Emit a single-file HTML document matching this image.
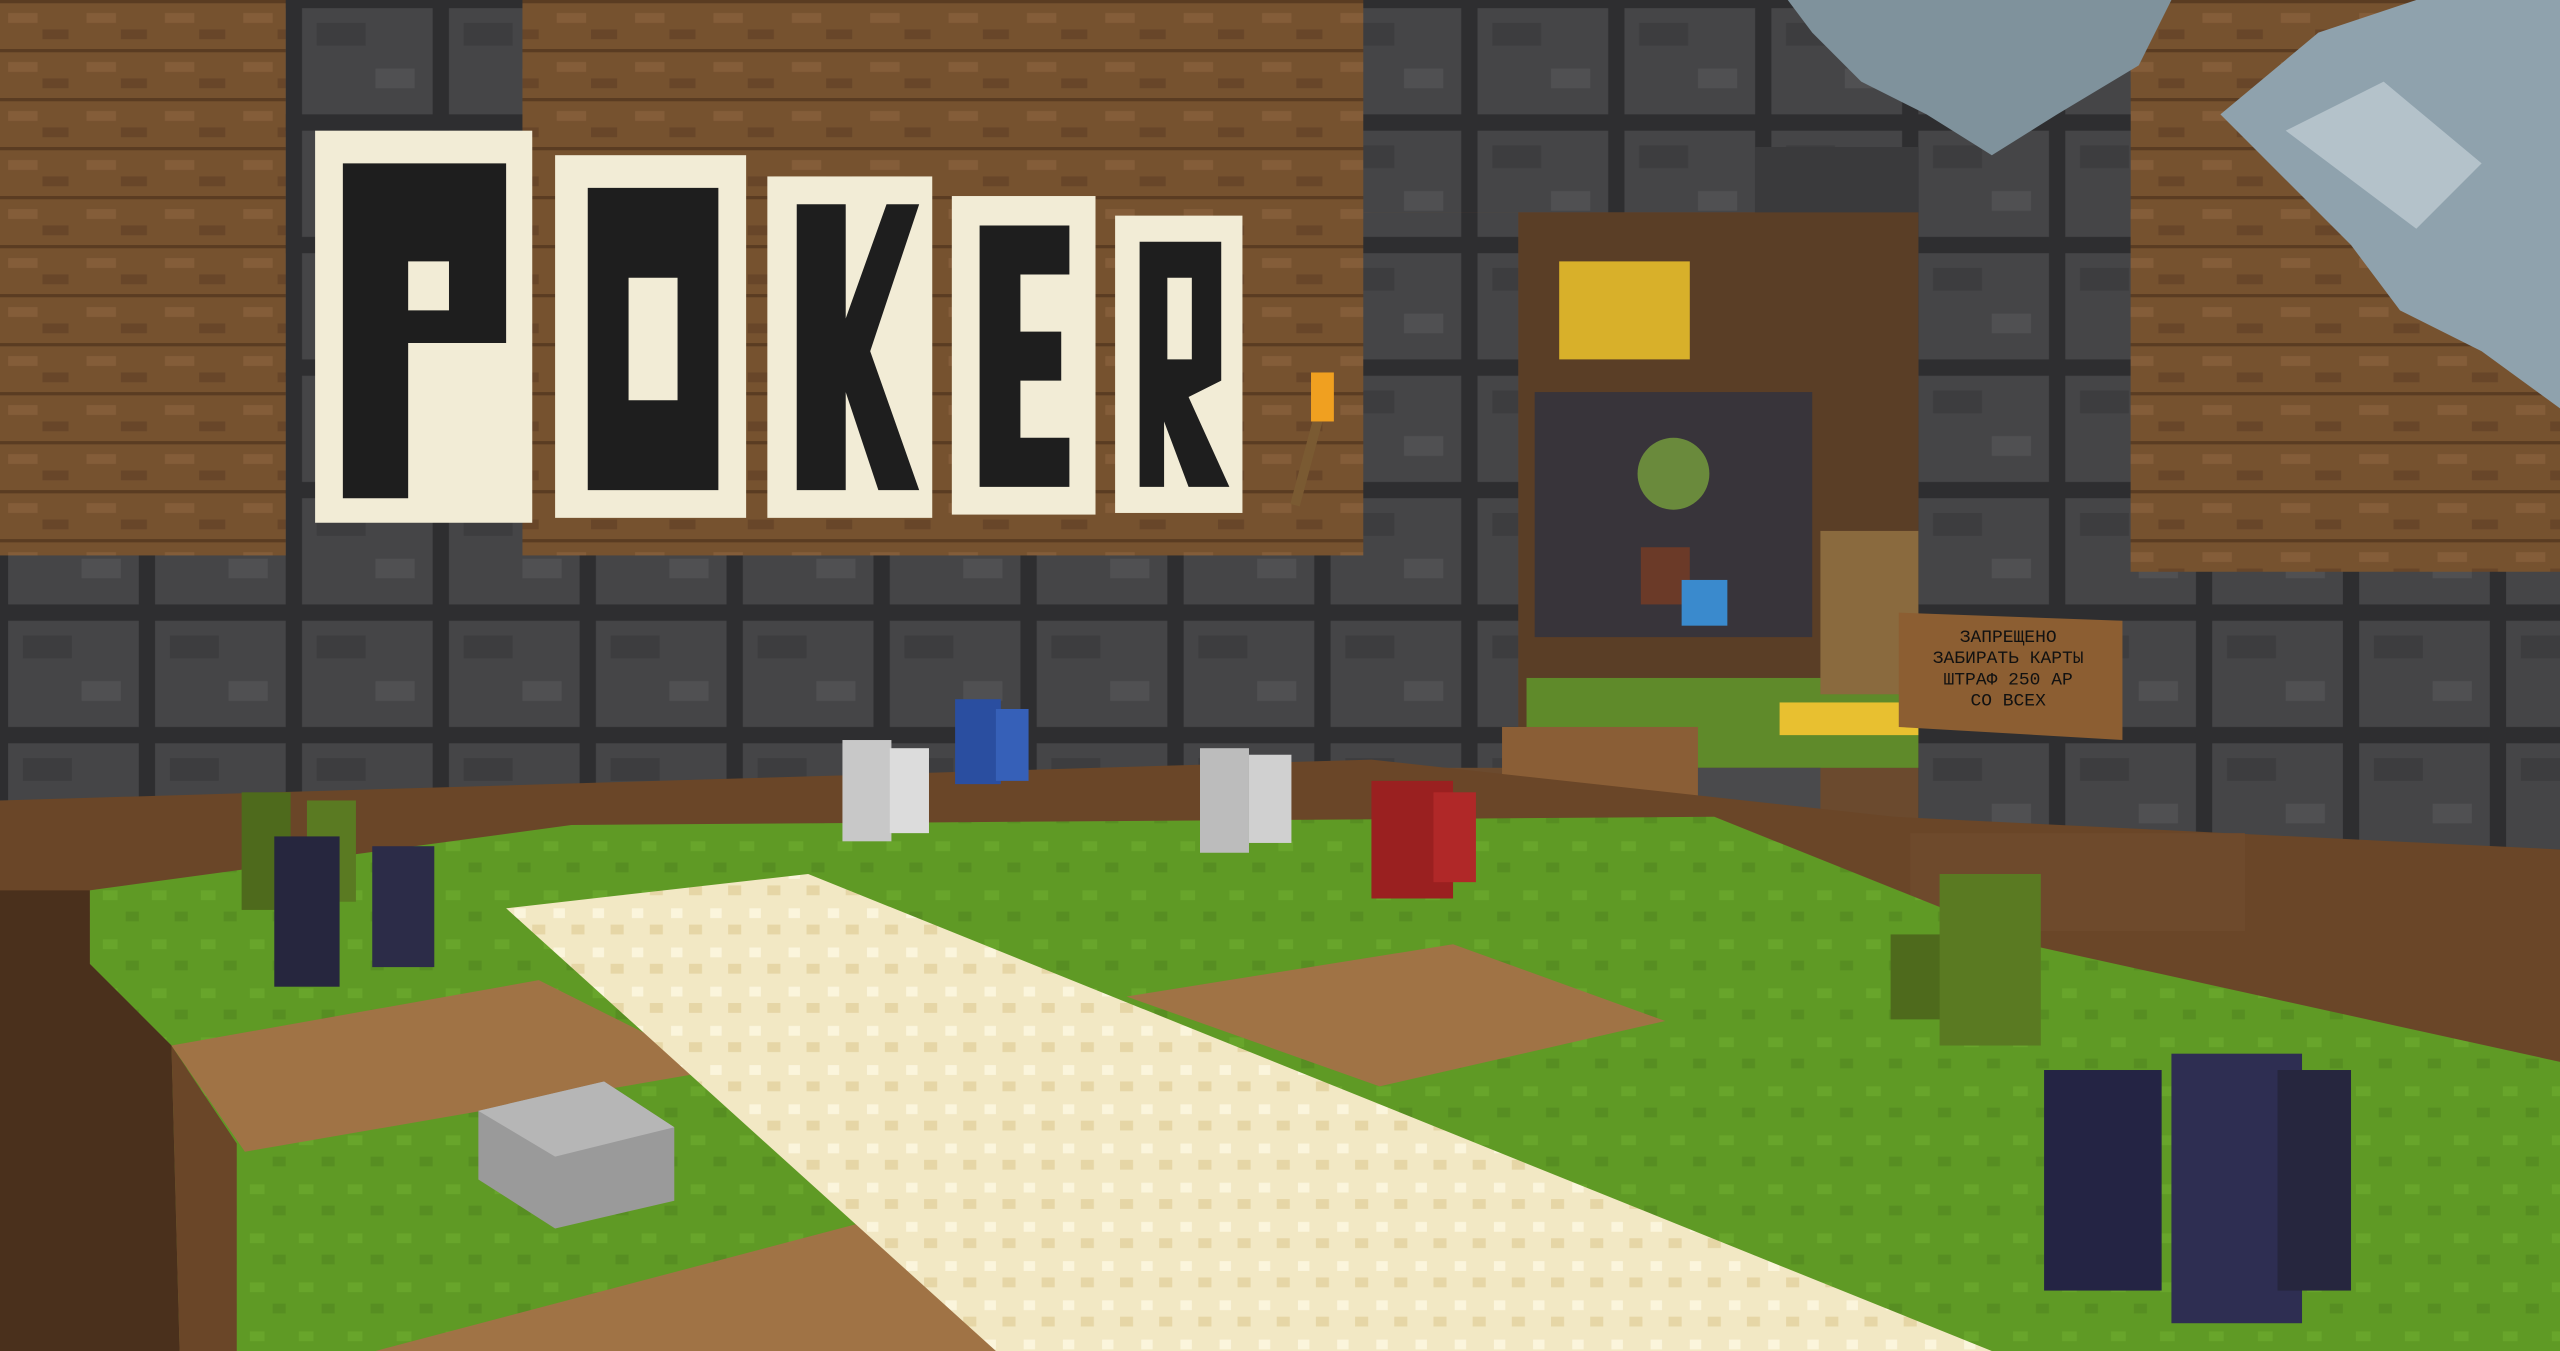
<!DOCTYPE html>
<html><head><meta charset="utf-8"><style>
html,body{margin:0;padding:0;width:2560px;height:1351px;overflow:hidden;background:#6b4a2e}
svg{display:block}
</style></head><body>
<svg width="2560" height="1351" viewBox="0 0 1568 827" preserveAspectRatio="none" xmlns="http://www.w3.org/2000/svg">
<defs>
<pattern id="wood" width="48" height="30" patternUnits="userSpaceOnUse">
<rect width="48" height="30" fill="#76522f"/><rect y="0" width="48" height="2" fill="#5a3c22"/><rect x="5" y="8" width="18" height="6" fill="#845d39"/><rect x="26" y="18" width="16" height="6" fill="#684629"/>
</pattern>
<pattern id="stone" width="90" height="75" patternUnits="userSpaceOnUse">
<rect width="90" height="75" fill="#2e2e30"/><rect x="5" y="5" width="80" height="65" fill="#454547"/><rect x="14" y="14" width="30" height="14" fill="#3d3d3f"/><rect x="50" y="42" width="24" height="12" fill="#505052"/>
</pattern>
<pattern id="felt" width="30" height="30" patternUnits="userSpaceOnUse">
<rect width="30" height="30" fill="#5f9a25"/><rect x="3" y="5" width="9" height="6" fill="#68a52b"/><rect x="17" y="18" width="8" height="6" fill="#578e22"/>
</pattern>
<pattern id="sand" width="24" height="24" patternUnits="userSpaceOnUse">
<rect width="24" height="24" fill="#f2e8c4"/><rect x="3" y="4" width="7" height="6" fill="#fbf5dc"/><rect x="14" y="14" width="8" height="6" fill="#e6d6a6"/>
</pattern>
</defs>
<rect x="0" y="0" width="840" height="350" fill="url(#wood)"/>
<rect x="1300" y="0" width="268" height="360" fill="url(#wood)"/>
<rect x="0" y="340" width="840" height="150" fill="url(#stone)"/>
<rect x="1300" y="350" width="268" height="170" fill="url(#stone)"/>
<rect x="175" y="0" width="145" height="345" fill="url(#stone)"/>
<rect x="835" y="0" width="470" height="130" fill="url(#stone)"/>
<rect x="835" y="130" width="95" height="340" fill="url(#stone)"/>
<rect x="1175" y="50" width="130" height="480" fill="url(#stone)"/>
<rect x="1075" y="90" width="100" height="120" fill="#3a3a3c"/>
<rect x="930" y="130" width="245" height="340" fill="#5a3e26"/>
<rect x="955" y="160" width="80" height="60" fill="#d8b02a"/>
<rect x="940" y="240" width="170" height="150" fill="#38343a"/>
<circle cx="1025" cy="290" r="22" fill="#6a8a3c"/>
<rect x="1005" y="335" width="30" height="35" fill="#6b3a28"/>
<rect x="1030" y="355" width="28" height="28" fill="#3a8acd"/>
<rect x="935" y="415" width="240" height="55" fill="#5f8a2a"/>
<rect x="1090" y="430" width="85" height="20" fill="#e8c030"/>
<rect x="1115" y="325" width="60" height="100" fill="#8a6a3e"/>
<rect x="920" y="445" width="120" height="60" fill="#8a5e36"/>
<rect x="1040" y="470" width="75" height="50" fill="#4a4a4c"/>
<!-- leaves -->
<polygon points="1095,0 1330,0 1310,40 1260,70 1220,95 1180,70 1140,50 1110,20" fill="#7f929c"/>
<polygon points="1360,70 1420,20 1480,0 1568,0 1568,250 1520,215 1470,190 1440,150 1400,110" fill="#8fa2ad"/>
<polygon points="1400,80 1460,50 1520,100 1480,140" fill="#b4c2ca"/>
<!-- POKER -->
<g fill="#f2ecd6">
<rect x="193" y="80" width="133" height="240"/><rect x="340" y="95" width="117" height="222"/><rect x="470" y="108" width="101" height="209"/><rect x="583" y="120" width="88" height="195"/><rect x="683" y="132" width="78" height="182"/>
</g>
<g fill="#1e1e1e">
<path d="M210 100h100v110h-60v95h-40zM250 160h25v30h-25z" fill-rule="evenodd"/>
<path d="M360 115h80v185h-80zM385 170h30v75h-30z" fill-rule="evenodd"/>
<path d="M488 125h30v70l25-70h20l-30 90l30 85h-25l-20-60v60h-30z"/>
<path d="M600 138h55v30h-30v35h25v30h-25v35h30v30h-55z"/>
<path d="M698 148h50v85l-20 10l25 55h-25l-15-40v40h-15zM715 170h15v50h-15z" fill-rule="evenodd"/>
</g>
<rect x="798" y="255" width="6" height="55" fill="#7a5a32" transform="rotate(15 800 280)"/>
<rect x="803" y="228" width="14" height="30" fill="#f0a020"/>
<polygon points="0,490 840,465 1160,500 1568,520 1568,650 1260,600 0,560" fill="#6a4628"/>
<rect x="1170" y="510" width="205" height="60" fill="#6e4a2c"/>
<polygon points="55,545 350,505 1050,500 1250,580 1568,650 1568,827 110,827 105,640 55,590" fill="url(#felt)"/>
<polygon points="0,545 55,545 55,590 105,640 110,827 0,827" fill="#4a301c"/>
<polygon points="105,640 145,700 145,827 110,827" fill="#6a4628"/>
<polygon points="105,640 330,600 440,655 150,705" fill="#a07345"/>
<polygon points="690,610 890,578 1020,625 845,665" fill="#a07345"/>
<polygon points="230,827 560,740 700,827" fill="#a07345"/>
<polygon points="310,556 495,535 1220,827 610,827" fill="url(#sand)"/>
<polygon points="293,680 370,662 413,690 413,735 340,752 293,722" fill="#9a9a9a"/>
<polygon points="293,680 370,662 413,690 340,708" fill="#b6b6b6"/>
<g>
<rect x="148" y="485" width="30" height="72" fill="#4e6a1c"/><rect x="188" y="490" width="30" height="62" fill="#5a7a22"/>
<rect x="168" y="512" width="40" height="92" fill="#26263e"/><rect x="228" y="518" width="38" height="74" fill="#2c2c48"/>
<rect x="516" y="453" width="30" height="62" fill="#c8c8c8"/><rect x="545" y="458" width="24" height="52" fill="#dcdcdc"/>
<rect x="585" y="428" width="28" height="52" fill="#2a4ea0"/><rect x="610" y="434" width="20" height="44" fill="#3660b8"/>
<rect x="735" y="458" width="30" height="64" fill="#bcbcbc"/><rect x="765" y="462" width="26" height="54" fill="#d0d0d0"/>
<rect x="840" y="478" width="50" height="72" fill="#9a2020"/><rect x="878" y="485" width="26" height="55" fill="#b02828"/>
<rect x="1158" y="572" width="32" height="52" fill="#4e6a1c"/><rect x="1188" y="535" width="62" height="105" fill="#5a7a22"/>
<rect x="1252" y="655" width="72" height="135" fill="#242444"/><rect x="1330" y="645" width="80" height="165" fill="#2e2e52"/><rect x="1395" y="655" width="45" height="135" fill="#26263e"/>
</g>
<polygon points="1163,375 1300,380 1300,453 1163,445" fill="#8c5e32"/>
<g font-family="Liberation Mono, DejaVu Sans Mono, monospace" font-size="11" fill="#111" text-anchor="middle">
<text x="1230" y="393">ЗАПРЕЩЕНО</text><text x="1230" y="406">ЗАБИРАТЬ КАРТЫ</text><text x="1230" y="419">ШТРАФ 250 АР</text><text x="1230" y="432">СО ВСЕХ</text>
</g>
</svg>
</body></html>
